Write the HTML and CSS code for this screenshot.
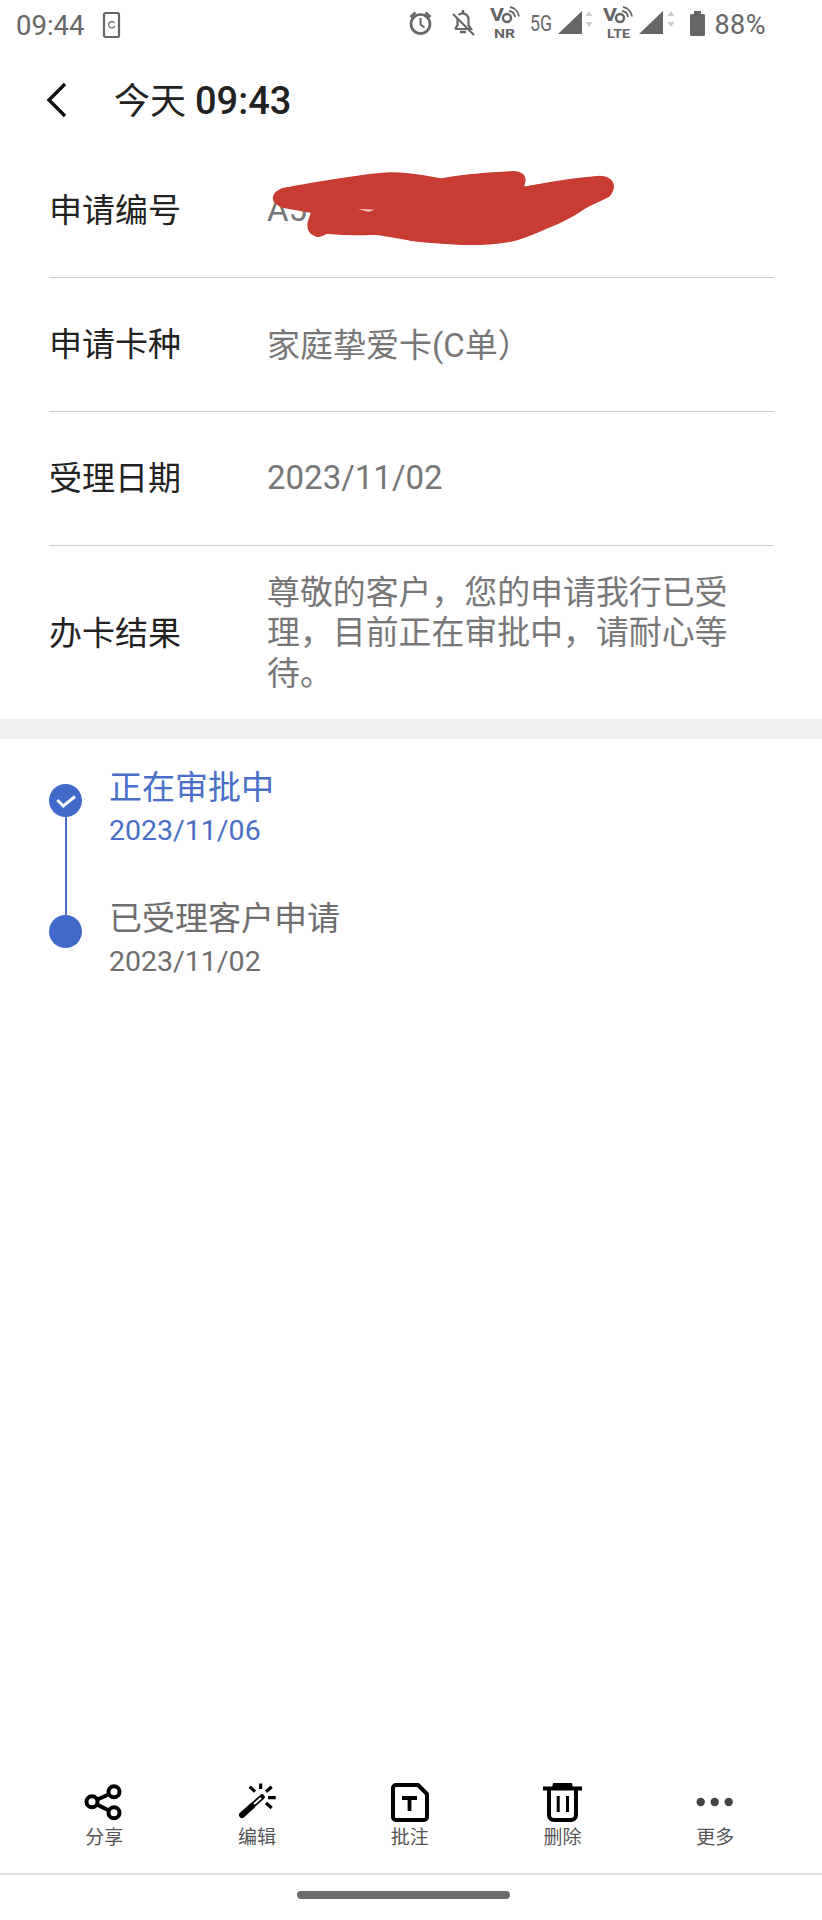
FILE: index.html
```html
<!DOCTYPE html>
<html lang="zh-CN">
<head>
<meta charset="utf-8">
<title>办卡进度</title>
<link rel="stylesheet" href="styles.css">
</head>
<body>
<div class="page">

  <div class="status-bar">
    <span class="status-time">09:44</span>
    <svg class="status-app" width="20" height="28" viewBox="0 0 20 28">
      <rect x="2" y="2" width="15" height="24" rx="1.5" fill="none" stroke="#666" stroke-width="2.2"/>
      <path d="M12.5 12 a3.2 3.2 0 1 0 0.3 3" fill="none" stroke="#666" stroke-width="1.2"/>
    </svg>
    <svg class="status-icons" width="305" height="50" viewBox="405 0 305 50">
      <!-- alarm -->
      <circle cx="421.5" cy="24" r="9.500" fill="none" stroke="#666" stroke-width="2.600"/>
      <path d="M421.5 18 v6.5 l4 3" fill="none" stroke="#666" stroke-width="2"/>
      <path d="M411.5 17 l5 -4.5 M431.5 17 l-5 -4.5" stroke="#666" stroke-width="2.6"/>
      <!-- bell off -->
      <path d="M456 29 h16 l-2.5 -3.5 v-6 a6 6 0 0 0 -10 -4.5 M458.5 19 v6.500 L456 29" fill="none" stroke="#666" stroke-width="2.2"/>
      <path d="M464 10 v3 M461 32 h6" stroke="#666" stroke-width="2.4"/>
      <path d="M454 14 L475 35" stroke="#666" stroke-width="2.2"/>
      <!-- volte nr -->
      <g fill="#666">
        <text class="vo-text" x="491" y="21" textLength="14" lengthAdjust="spacingAndGlyphs">V</text>
        <circle cx="508" cy="18" r="4" fill="none" stroke="#666" stroke-width="2.400"/>
        <path d="M510 11 a7 7 0 0 1 6 6 M511 7 a11 11 0 0 1 9 9.500" fill="none" stroke="#666" stroke-width="1.800"/>
      </g>
      <text class="net-text" x="495" y="38" textLength="21" lengthAdjust="spacingAndGlyphs">NR</text>
      <text class="five-g" x="531" y="31" textLength="22" lengthAdjust="spacingAndGlyphs">5G</text>
      <path d="M559 34 L583 11 V34 Z" fill="#666"/>
      <path d="M590 11 l3.500 5 h-7 Z M590 27 l3.500 -5 h-7 Z" fill="#ccc"/>
      <!-- volte lte -->
      <g fill="#666" transform="translate(113 0)">
        <text class="vo-text" x="491" y="21" textLength="14" lengthAdjust="spacingAndGlyphs">V</text>
        <circle cx="508" cy="18" r="4" fill="none" stroke="#666" stroke-width="2.400"/>
        <path d="M510 11 a7 7 0 0 1 6 6 M511 7 a11 11 0 0 1 9 9.500" fill="none" stroke="#666" stroke-width="1.800"/>
      </g>
      <text class="net-text" x="608" y="38" textLength="23" lengthAdjust="spacingAndGlyphs">LTE</text>
      <path d="M640 34 L664 11 V34 Z" fill="#666"/>
      <path d="M672 11 l3.500 5 h-7 Z M672 27 l3.500 -5 h-7 Z" fill="#ccc"/>
      <!-- battery -->
      <path d="M695 11 h7 v3 h2.500 a1.500 1.500 0 0 1 1.500 1.500 V34.500 a1.500 1.500 0 0 1 -1.500 1.500 h-12 a1.500 1.500 0 0 1 -1.500 -1.500 V15.500 a1.500 1.500 0 0 1 1.500 -1.500 h2.500 Z" fill="#666"/>
    </svg>
    <span class="status-battery">88%</span>
  </div>

  <div class="header">
    <svg class="back-icon" width="24" height="36" viewBox="0 0 24 36">
      <path d="M20 2 L4 18 L20 34" fill="none" stroke="#111" stroke-width="3.400"/>
    </svg>
    <span class="header-title">今天 <span class="header-time">09:43</span></span>
  </div>

  <div class="info-list">
    <div class="info-row">
      <span class="info-label">申请编号</span>
      <span class="info-value">A5</span>
      <svg class="scribble" width="400" height="100" viewBox="0 0 1200 300">
        <path d="M100 115 Q108 88 150 85 C250 68 350 48 450 42 C510 42 560 52 605 60 C660 48 740 42 820 38 Q855 40 855 65 L850 85 C920 72 1000 58 1080 52 Q1120 55 1120 85 Q1115 110 1100 115 C1075 128 1050 138 1030 150 C1000 172 970 185 950 195 C900 215 860 235 820 245 C760 255 700 258 650 255 C600 252 560 250 520 245 C480 238 440 228 400 225 C350 228 300 226 260 222 Q240 236 225 230 Q200 220 205 190 L215 160 L130 145 Q100 135 100 115 Z" fill="#c93c33" stroke="#c93c33" stroke-width="4" stroke-linejoin="round"/>
        <path d="M355 150 L405 152 L385 158 Z" fill="#f3d8d4"/>
      </svg>
    </div>
    <div class="info-row">
      <span class="info-label">申请卡种</span>
      <span class="info-value">家庭挚爱卡(C单）</span>
    </div>
    <div class="info-row">
      <span class="info-label">受理日期</span>
      <span class="info-value">2023/11/02</span>
    </div>
    <div class="info-row info-row-last">
      <span class="info-label info-label-last">办卡结果</span>
      <span class="info-value info-value-long">尊敬的客户，您的申请我行已受理，目前正在审批中，请耐心等待。</span>
    </div>
  </div>

  <div class="band"></div>

  <div class="timeline">
    <div class="timeline-item timeline-current">
      <span class="timeline-dot">
        <svg width="33" height="33" viewBox="0 0 33 33">
          <path d="M8.300 16 L14.300 22 L26 12.500" fill="none" stroke="#fff" stroke-width="3"/>
        </svg>
      </span>
      <div class="timeline-text">
        <div class="timeline-title">正在审批中</div>
        <div class="timeline-date">2023/11/06</div>
      </div>
    </div>
    <div class="timeline-item">
      <span class="timeline-dot"></span>
      <div class="timeline-text">
        <div class="timeline-title">已受理客户申请</div>
        <div class="timeline-date">2023/11/02</div>
      </div>
    </div>
  </div>

  <div class="toolbar">
    <div class="tool">
      <svg width="40" height="40" viewBox="0 0 40 40">
        <path d="M30 10 L8 20 L30 31" fill="none" stroke="#000" stroke-width="4"/>
        <circle cx="30" cy="9.700" r="5.500" fill="#fff" stroke="#000" stroke-width="4"/>
        <circle cx="8" cy="19.700" r="5.500" fill="#fff" stroke="#000" stroke-width="4"/>
        <circle cx="30" cy="30.700" r="5.500" fill="#fff" stroke="#000" stroke-width="4"/>
      </svg>
      <span class="tool-label">分享</span>
    </div>
    <div class="tool">
      <svg width="40" height="40" viewBox="0 0 40 40">
        <path d="M5 33 L15 24" stroke="#000" stroke-width="6" stroke-linecap="round"/>
        <path d="M16 23 L25 15" stroke="#000" stroke-width="5.500" stroke-linecap="round"/>
        <path d="M17 22 L24 16" stroke="#fff" stroke-width="2"/>
        <path d="M23.700 1.500 V7 M31 15.700 H38.700 M12.700 4.700 L18 9.700 M29 9.700 L34.700 4.700 M29 21 L34.700 26" stroke="#000" stroke-width="3.200"/>
      </svg>
      <span class="tool-label">编辑</span>
    </div>
    <div class="tool">
      <svg width="40" height="40" viewBox="0 0 40 40">
        <path d="M6 3 H28 L37 12 V35 a3 3 0 0 1 -3 3 H6 a3 3 0 0 1 -3 -3 V6 a3 3 0 0 1 3 -3 Z" fill="none" stroke="#000" stroke-width="4" stroke-linejoin="round"/>
        <path d="M12 16 H27 M19.500 16 V29" stroke="#000" stroke-width="3.800"/>
      </svg>
      <span class="tool-label">批注</span>
    </div>
    <div class="tool">
      <svg width="40" height="40" viewBox="0 0 40 40">
        <path d="M0 6.500 H39" stroke="#000" stroke-width="4"/>
        <path d="M9 6 L10 1 H29 L30 6 Z" fill="#000"/>
        <path d="M6 7 V33 a5 5 0 0 0 5 5 H28 a5 5 0 0 0 5 -5 V7" fill="none" stroke="#000" stroke-width="4"/>
        <path d="M15.200 14 V30 M24.500 14 V30" stroke="#000" stroke-width="3"/>
      </svg>
      <span class="tool-label">删除</span>
    </div>
    <div class="tool">
      <svg width="40" height="40" viewBox="0 0 40 40">
        <circle cx="5.700" cy="20" r="4.200" fill="#444"/>
        <circle cx="19.700" cy="20" r="4.200" fill="#444"/>
        <circle cx="33.700" cy="20" r="4.200" fill="#444"/>
      </svg>
      <span class="tool-label">更多</span>
    </div>
  </div>

  <div class="home-area">
    <div class="home-pill"></div>
  </div>

</div>
</body>
</html>
```

FILE: styles.css
```css
body {
  margin: 0;
  background: #fff;
  font-family: Roboto, "Noto Sans CJK SC", sans-serif;
}

.page {
  width: 822px;
  height: 1920px;
  display: flex;
  flex-direction: column;
  overflow: hidden;
}

/* status bar */
.status-bar {
  height: 50px;
  display: flex;
  align-items: center;
  padding-left: 16px;
  color: #666;
}

.status-time {
  font-size: 27.5px;
}

.status-app {
  margin-left: 18px;
}

.status-icons {
  margin-left: auto;
}

.status-battery {
  font-size: 27px;
  letter-spacing: 0.5px;
  margin-left: 5px;
  margin-right: 56px;
}

.vo-text {
  font-size: 18px;
  font-weight: 700;
}

.net-text {
  font-size: 13.5px;
  font-weight: 700;
  fill: #666;
}

.five-g {
  font-size: 22.5px;
  fill: #666;
}

/* header */
.header {
  height: 89px;
  padding-top: 5px;
  display: flex;
  align-items: center;
  padding-left: 45px;
}

.back-icon {
  flex: none;
}

.header-title {
  margin-left: 45px;
  padding-bottom: 4px;
  font-size: 36px;
  color: #222;
}

.header-time {
  font-size: 38px;
  font-weight: 500;
}

/* info rows */
.info-list {
  padding: 0 48px 0 49px;
}

.info-row {
  position: relative;
  height: 133px;
  display: flex;
  align-items: center;
  border-bottom: 1px solid #ccc;
}

.info-row-last {
  height: 173px;
  border-bottom: none;
}

.info-label {
  flex: none;
  width: 218px;
  padding-bottom: 6px;
  font-size: 33px;
  color: #222;
}

.info-label-last {
  padding-bottom: 4px;
}

.info-value {
  padding-bottom: 3px;
  font-size: 33px;
  color: #777;
}

.info-value-long {
  padding: 2px 0 0;
  font-size: 32.9px;
  line-height: 40.5px;
}

.scribble {
  position: absolute;
  left: 191px;
  top: 15px;
}

.band {
  height: 20px;
  background: #efefef;
}

/* timeline */
.timeline {
  flex: 1;
  padding: 26px 0 0 49px;
}

.timeline-item {
  position: relative;
  height: 131px;
  display: flex;
}

.timeline-current::after {
  content: "";
  position: absolute;
  left: 15.500px;
  top: 50px;
  width: 2px;
  height: 100px;
  background: #4a6fc8;
}

.timeline-dot {
  flex: none;
  width: 33px;
  height: 33px;
  margin-top: 19px;
  border-radius: 50%;
  background: #4169c9;
}

.timeline-dot svg {
  display: block;
}

.timeline-text {
  margin-left: 27px;
}

.timeline-title {
  padding-top: 1px;
  font-size: 33px;
  line-height: 44px;
  color: #6e6e6e;
}

.timeline-date {
  font-size: 28.5px;
  line-height: 41px;
  color: #6e6e6e;
}

.timeline-current .timeline-title,
.timeline-current .timeline-date {
  color: #4a6fc8;
}

/* bottom toolbar */
.toolbar {
  height: 91px;
  padding-top: 1px;
  display: flex;
  padding-left: 28px;
  border-bottom: 2px solid #ddd;
}

.tool {
  width: 152.75px;
  display: flex;
  flex-direction: column;
  align-items: center;
}

.tool svg {
  display: block;
}

.tool-label {
  margin-top: 3px;
  font-size: 19px;
  line-height: 26px;
  color: #555;
}

.home-area {
  height: 45px;
  display: flex;
  justify-content: center;
}

.home-pill {
  width: 213px;
  height: 8px;
  margin-top: 16px;
  margin-right: 16px;
  border-radius: 4px;
  background: #6b6b6b;
}
```
